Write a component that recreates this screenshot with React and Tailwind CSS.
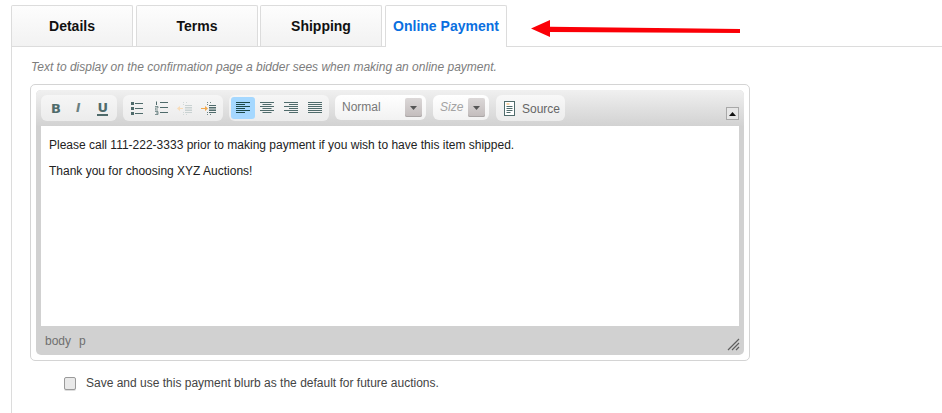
import React from 'react';

const ink = '#4f6b6b';

const Tab = ({ label, active }) => (
  <div
    className={`w-[122px] flex items-center justify-center rounded-t-[2px] border border-b-0 border-[#dcdcdc] text-[14px] font-bold ${
      active
        ? 'h-[42px] pb-[1px] bg-white text-[#0a6fe0] relative'
        : 'h-[41px] bg-gradient-to-b from-[#fdfdfd] to-[#f2f2f2] text-[#111]'
    }`}
  >
    {label}
  </div>
);

const Group = ({ width, children }) => (
  <div className={`h-[26px] ${width} flex items-center rounded-[6px] bg-gradient-to-b from-[#f6f6f6] to-[#ececec]`}>
    {children}
  </div>
);

const Lines = ({ rows, active }) => (
  <div className={`w-[24px] h-[22px] rounded-[3px] flex items-center justify-center ${active ? 'bg-[#a5d8ff]' : ''}`}>
    <svg width="14" height="12" viewBox="0 0 14 12">
      {rows.map(([x, w], i) => (
        <rect key={i} x={x} y={i * 2} width={w} height="1" fill={active ? '#1c4a4a' : ink} />
      ))}
    </svg>
  </div>
);

const Bullets = () => (
  <svg width="12" height="13" viewBox="0 0 12 13">
    <rect x="0" y="0" width="3" height="3" fill={ink} />
    <rect x="0" y="5" width="3" height="3" fill={ink} />
    <rect x="0" y="10" width="3" height="3" fill={ink} />
    <rect x="4" y="1" width="8" height="1" fill={ink} />
    <rect x="4" y="6" width="8" height="1" fill={ink} />
    <rect x="4" y="11" width="8" height="1" fill={ink} />
  </svg>
);

const Numbers = () => (
  <svg width="13" height="14" viewBox="0 0 13 14">
    <rect x="1" y="0.5" width="1" height="3.5" fill={ink} />
    <path d="M0 5.5h3v1.5h-3v2h3M0 10.5h3v3h-3M1 12h2" fill="none" stroke={ink} strokeWidth="0.7" />
    <rect x="5" y="1" width="8" height="1" fill={ink} />
    <rect x="5" y="6" width="8" height="1" fill={ink} />
    <rect x="5" y="11" width="8" height="1" fill={ink} />
  </svg>
);

const Indent = ({ out }) => {
  const bar = out ? '#c9d2d2' : ink;
  const arrow = out ? '#f8dcb8' : '#f2a94e';
  return (
    <svg width="15" height="13" viewBox="0 0 15 13">
      <path d={out ? 'M0 6.5l3-2.5v2h3v1h-3v2z' : 'M0 6h4v-2l3 2.5-3 2.5v-2h-4z'} fill={arrow} />
      <rect x="8" y="3" width="7" height="1" fill={bar} />
      <rect x="8" y="5" width="7" height="1.5" fill={bar} />
      <rect x="8" y="7.5" width="7" height="1.5" fill={bar} />
      <rect x="8" y="10" width="7" height="1" fill={bar} />
      <path d="M6.5 0v3M6.5 10v3M9 0.5h1M9 12.5h1" stroke={bar} strokeWidth="0.8" strokeDasharray="1 1" />
    </svg>
  );
};

const Combo = ({ width, label, italic }) => (
  <div className={`h-[25px] ${width} flex items-center justify-between pl-[7px] pr-[4px] rounded-[6px] bg-gradient-to-b from-[#ffffff] to-[#f2f2f2]`}>
    <span className={`pb-[2px] text-[12px] ${italic ? 'italic text-[#a3a3a3]' : 'text-[#777]'}`}>{label}</span>
    <div className="w-[17px] h-[19px] flex items-center justify-center rounded-[2px] bg-gradient-to-b from-[#dcd8d8] to-[#c2bcbc] shadow-[inset_0_-1px_0_#a9a5a5]">
      <svg width="7" height="4" viewBox="0 0 7 4"><path d="M0 0h7L3.5 4z" fill="#555" /></svg>
    </div>
  </div>
);

export default function App() {
  return (
    <div className="relative w-[942px] h-[413px] overflow-hidden bg-white pt-[5px] pl-[11px] font-['Liberation_Sans',Arial,sans-serif]">
      <div className="flex items-start h-[41px] relative">
        <Tab label="Details" />
        <div className="ml-[3px]"><Tab label="Terms" /></div>
        <div className="ml-[2px]"><Tab label="Shipping" /></div>
        <div className="ml-[3px]"><Tab label="Online Payment" active /></div>
      </div>

      {/* arrow drawn on top of the screenshot */}
      <svg className="absolute left-[530px] top-[18px]" width="214" height="24" viewBox="0 0 214 24">
        <path d="M1 10.5L20 2v6.7l190 2.3v4L20 14v5z" fill="#fb0007" />
      </svg>

      <div className="h-[367px] border-l border-t border-[#dcdcdc] pl-[18px] pt-[13px]">
        <p className="ml-[1px] text-[12px] italic leading-[14px] text-[#7d7d7d]">
          Text to display on the confirmation page a bidder sees when making an online payment.
        </p>

        <div className="mt-[10px] w-[720px] h-[277px] p-[5px] border border-[#d4d4d4] rounded-[5px]">
          <div className="h-full rounded-[5px] bg-[#d1d1d1] overflow-hidden flex flex-col">
            <div className="relative h-[36px] flex shrink-0 items-start gap-[6px] pl-[5px] pt-[5px] bg-gradient-to-b from-[#f0f0f0] to-[#d2d2d2]">
              <Group width="w-[76px]">
                <div className="flex items-center pl-[10px] font-['DejaVu_Sans',sans-serif] text-[13px] leading-none text-[#4f6b6b]">
                  <span className="font-bold">B</span>
                  <span className="ml-[15px] italic font-bold text-[#6b7f7f] text-[12px]">I</span>
                  <span className="ml-[17px] font-bold border-b-2 border-[#4f6b6b]">U</span>
                </div>
              </Group>
              <Group width="w-[100px]">
                <div className="flex items-center pl-[8px]">
                  <Bullets />
                  <div className="ml-[12px] flex"><Numbers /></div>
                  <div className="ml-[9px] flex"><Indent out /></div>
                  <div className="ml-[9px] flex"><Indent /></div>
                </div>
              </Group>
              <Group width="w-[100px]">
                <div className="flex w-full items-center pl-[2px]">
                  <Lines active rows={[[0, 14], [0, 9], [0, 14], [0, 9], [0, 14], [0, 9]]} />
                  <Lines rows={[[0, 14], [2.5, 9], [0, 14], [2.5, 9], [0, 14], [2.5, 9]]} />
                  <Lines rows={[[0, 14], [5, 9], [0, 14], [5, 9], [0, 14], [5, 9]]} />
                  <Lines rows={[[0, 14], [0, 14], [0, 14], [0, 14], [0, 14], [0, 14]]} />
                </div>
              </Group>
              <Combo width="w-[91px]" label="Normal" />
              <div className="ml-[1px]"><Combo width="w-[56px]" label="Size" italic /></div>
              <div className="ml-[1px] h-[26px] w-[69px] flex items-center gap-[7px] pl-[8px] rounded-[6px] bg-gradient-to-b from-[#f8f8f8] to-[#ececec]">
                <svg width="11" height="15" viewBox="0 0 11 15">
                  <rect x="0.5" y="0.5" width="10" height="14" fill="#fff" stroke="#4f6b6b" />
                  <path d="M2.5 3h3" stroke="#f2a94e" />
                  <path d="M2.5 5.5h6M2.5 7.5h6M2.5 9.5h6M2.5 11.5h4" stroke="#4f6b6b" />
                </svg>
                <span className="text-[12px] text-[#666] pt-[1px]">Source</span>
              </div>
              <div className="absolute left-[690px] top-[17px] w-[13px] h-[13px] flex items-center justify-center border border-[#a8a8a8] bg-[#e6e6e6]">
                <svg width="7" height="4" viewBox="0 0 7 4"><path d="M3.5 0L7 4H0z" fill="#111" /></svg>
              </div>
            </div>

            <div className="h-[200px] shrink-0 mx-[5px] bg-white px-[8px] pt-[12px] text-[12px] leading-[15px] text-[#222]">
              <p>Please call 111-222-3333 prior to making payment if you wish to have this item shipped.</p>
              <p className="mt-[11px]">Thank you for choosing XYZ Auctions!</p>
            </div>

            <div className="relative flex-1 flex items-center gap-[8px] pl-[9px] pt-[1px] text-[12px] text-[#6f6f6f]">
              <span>body</span>
              <span>p</span>
              <svg className="absolute right-[4px] bottom-[4px]" width="13" height="13" viewBox="0 0 13 13">
                <path d="M1 12L12 1M5 12L12 5M9 12l3-3" stroke="#5e5e5e" strokeWidth="1.2" fill="none" />
              </svg>
            </div>
          </div>
        </div>

        <label className="mt-[13px] ml-[34px] flex items-center gap-[10px] text-[12px] text-[#444]">
          <span className="w-[12px] h-[13px] rounded-[2px] border border-[#9a9a9a] bg-[#e9e9e9] shadow-[0_1px_0_#ddd]" />
          <span>Save and use this payment blurb as the default for future auctions.</span>
        </label>
      </div>
    </div>
  );
}
